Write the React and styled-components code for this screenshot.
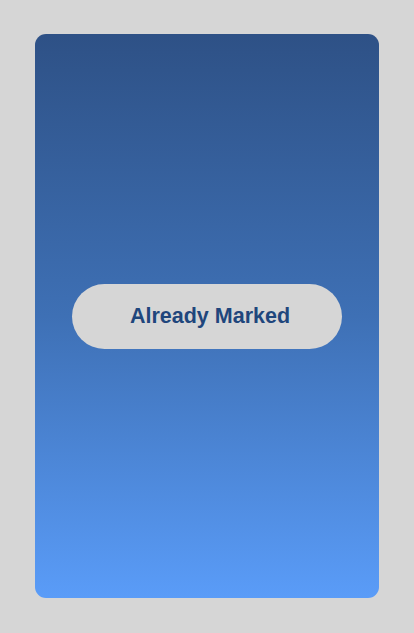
import React from "react";
import styled, { createGlobalStyle } from "styled-components";

const GlobalStyle = createGlobalStyle`
  html, body {
    margin: 0;
    padding: 0;
    background: #d6d6d6;
  }
  #root {
    min-height: 100vh;
  }
`;

const Page = styled.div`
  box-sizing: border-box;
  height: 633px;
  padding: 34px 35px 35px 35px;
  display: flex;
  background: #d6d6d6;
`;

const Card = styled.div`
  flex: 1;
  border-radius: 11px;
  background: linear-gradient(180deg, #2e5186 0%, #3e70b5 50%, #5a9cf8 100%);
  display: flex;
  align-items: center;
  justify-content: center;
`;

const MarkButton = styled.button`
  width: 270px;
  height: 65px;
  border: none;
  border-radius: 33px;
  background: #d6d6d6;
  color: #1f467c;
  font-family: "Liberation Sans", Arial, sans-serif;
  font-weight: 700;
  font-size: 21.5px;
  padding: 0 0 0 6px;
  cursor: pointer;
`;

const App = () => {
  return (
    <>
      <GlobalStyle />
      <Page>
        <Card>
          <MarkButton>Already Marked</MarkButton>
        </Card>
      </Page>
    </>
  );
};

export default App;
